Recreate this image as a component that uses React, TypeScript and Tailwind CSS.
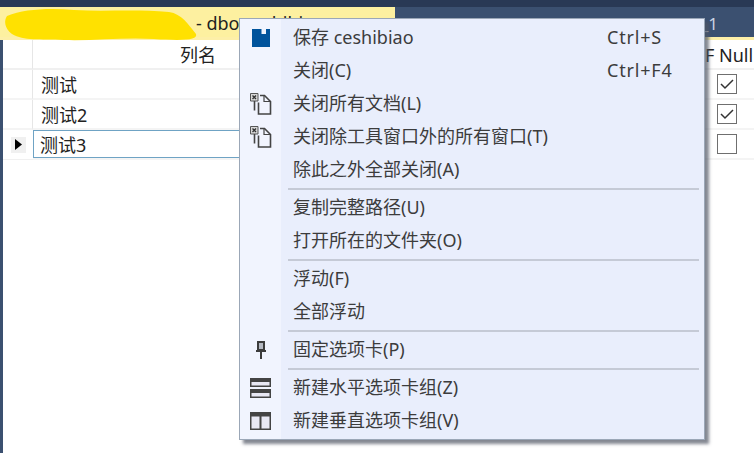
import React from 'react';

const FONT = "font-['Noto_Sans','Noto_Sans_CJK_SC',sans-serif]";

function SaveIcon() {
  return (
    <svg width="18" height="18" viewBox="0 0 18 18">
      <path d="M0 0H18V18H0Z" fill="#00539c" />
      <path d="M9.5 0h4.5v5h-4.5z" fill="#eef2fd" />
    </svg>
  );
}

function CloseAllIcon() {
  return (
    <svg width="22" height="22" viewBox="0 0 22 22" fill="none">
      <path d="M0.5 0.5H8V8H0.5Z" fill="#d8d8d8" stroke="#555" />
      <path d="M2.5 2.5L6 6M6 2.5L2.5 6" stroke="#333" strokeWidth="1.4" />
      <path d="M4.5 8V17.5" stroke="#444" strokeWidth="1.6" />
      <path d="M10 2.5H14.5L20.5 8.5V21H8.5V9.5" stroke="#444" strokeWidth="1.6" />
      <path d="M14 2.5V8.5H20" stroke="#444" strokeWidth="1.2" />
    </svg>
  );
}

function PinIcon() {
  return (
    <svg width="12" height="18" viewBox="0 0 12 18" fill="none">
      <path d="M3 1H9V9H3Z" stroke="#3c3c3c" strokeWidth="2" fill="#b5b9c2" />
      <path d="M1 10H11" stroke="#3c3c3c" strokeWidth="2" />
      <path d="M6 10V18" stroke="#3c3c3c" strokeWidth="2" />
    </svg>
  );
}

function HorizontalIcon() {
  return (
    <svg width="21" height="20" viewBox="0 0 21 20">
      <path d="M0 0H21V9H0Z" fill="#444" />
      <path d="M1.5 4H19.5V7.5H1.5Z" fill="#e8e8f4" />
      <path d="M0 11H21V20H0Z" fill="#444" />
      <path d="M1.5 15H19.5V18.5H1.5Z" fill="#e8e8f4" />
    </svg>
  );
}

function VerticalIcon() {
  return (
    <svg width="21" height="18" viewBox="0 0 21 18">
      <path d="M0 0H21V18H0Z" fill="#444" />
      <path d="M1.5 4.5H9.5V16.5H1.5ZM11.5 4.5H19.5V16.5H11.5Z" fill="#e8e8f4" />
    </svg>
  );
}

type MenuItem = { label: string; shortcut?: string; icon?: React.ReactNode } | 'sep';

const items: MenuItem[] = [
  { label: '保存 ceshibiao', shortcut: 'Ctrl+S', icon: <SaveIcon /> },
  { label: '关闭(C)', shortcut: 'Ctrl+F4' },
  { label: '关闭所有文档(L)', icon: <CloseAllIcon /> },
  { label: '关闭除工具窗口外的所有窗口(T)', icon: <CloseAllIcon /> },
  { label: '除此之外全部关闭(A)' },
  'sep',
  { label: '复制完整路径(U)' },
  { label: '打开所在的文件夹(O)' },
  'sep',
  { label: '浮动(F)' },
  { label: '全部浮动' },
  'sep',
  { label: '固定选项卡(P)', icon: <PinIcon /> },
  'sep',
  { label: '新建水平选项卡组(Z)', icon: <HorizontalIcon /> },
  { label: '新建垂直选项卡组(V)', icon: <VerticalIcon /> },
];

function Checkbox({ checked }: { checked?: boolean }) {
  return (
    <span className="flex h-[20px] w-[20px] items-center justify-center border border-[#6f6f6f] bg-white">
      {checked && (
        <svg width="14" height="12" viewBox="0 0 14 12" fill="none">
          <path d="M1 6L5 10L13 2" stroke="#333" strokeWidth="1.5" />
        </svg>
      )}
    </span>
  );
}

const rows = [
  { name: '测试', checked: true },
  { name: '测试2', checked: true },
  { name: '测试3', checked: false, active: true },
];

export default function App() {
  return (
    <div className={`relative h-[453px] w-[754px] overflow-hidden bg-white text-[18px] ${FONT}`}>
      <div className="h-[7px] bg-[#293955]" />
      <div className="flex h-[33px] border-b-[3px] border-b-[#fdefa8] bg-[#3b5070]">
        <div className="w-[395px] whitespace-nowrap bg-[#fdf0a0] pl-[196px] leading-[33px] text-[#222]">- dbo.ceshibiao</div>
        <div className="flex flex-1 justify-end whitespace-nowrap pr-[36px] text-[17px] leading-[33px] text-[#c9d3e2]">
          SQLQuery1.sql - sa (51) - dbo.Table_1
        </div>
      </div>
      <svg className="absolute left-[4px] top-[8px]" width="194" height="34" viewBox="0 0 194 34">
        <path
          d="M3 8C20 1 45 0 70 2C100 4 130 1 165 4C178 6 184 16 192 26C194 32 180 33 150 31C120 29 90 33 60 32C35 31 20 33 8 26C0 20 0 12 3 8Z"
          fill="#ffe100"
        />
      </svg>

      <div className="flex h-[413px] border-l-[3px] border-l-[#3b5070]">
        <div className="w-[30px] shrink-0">
          <div className="h-[30px] border-b-2 border-r border-b-[#f0f0f0] border-r-[#e6e6e6]" />
          <div className="h-[30px] border-b-2 border-r border-b-[#f4f4f4] border-r-[#e6e6e6]" />
          <div className="h-[30px] border-b-2 border-r border-b-[#f4f4f4] border-r-[#e6e6e6]" />
          <div className="flex h-[30px] items-center justify-center border-b border-b-[#f0f0f0]">
            <span className="flex h-[16px] w-[15px] items-center justify-center bg-[#f0f0f0]">
              <svg width="7" height="11" viewBox="0 0 7 11">
                <path d="M0 0L7 5.5L0 11Z" fill="#000" />
              </svg>
            </span>
          </div>
        </div>
        <div className="flex-1 text-[#222]">
          <div className="flex h-[30px] border-b-2 border-b-[#f0f0f0]">
            <div className="w-[355px] pl-[147px] leading-[30px]">列名</div>
            <div className="flex-1 whitespace-nowrap pl-[317px] leading-[30px]">F Null</div>
          </div>
          {rows.map((r) => (
            <div key={r.name} className="flex h-[30px] border-b-2 border-b-[#f4f4f4]">
              <div
                className={
                  r.active
                    ? 'w-[640px] border border-[#6fa3c4] pl-[6px] leading-[28px]'
                    : 'w-[640px] pl-[8px] leading-[30px]'
                }
              >
                {r.name}
              </div>
              <div className="flex flex-1 items-center pl-[44px]">
                <Checkbox checked={r.checked} />
              </div>
            </div>
          ))}
        </div>
      </div>

      <div className="absolute left-[239px] top-[18px] w-[466px] border border-[#9ba7b7] bg-[#e9eefc] py-[2px] shadow-[4px_4px_3px_rgba(80,85,100,0.7)]">
        <div className="absolute bottom-0 left-0 top-0 w-[41px] bg-[#f1f4fe]" />
        {items.map((it, i) =>
          it === 'sep' ? (
            <div key={i} className="relative h-[5px] py-[1.5px] pl-[48px] pr-[5px]">
              <div className="h-[2px] bg-[#c5cad6]" />
            </div>
          ) : (
            <div key={i} className="relative flex h-[33px] items-center text-[#3c3c3c]">
              <div className="flex w-[41px] shrink-0 items-center justify-center">{it.icon}</div>
              <div className="flex-1 whitespace-nowrap pl-[12px]">{it.label}</div>
              {it.shortcut && <div className="w-[97px] shrink-0 whitespace-nowrap tracking-[0.8px]">{it.shortcut}</div>}
            </div>
          ),
        )}
      </div>
    </div>
  );
}
